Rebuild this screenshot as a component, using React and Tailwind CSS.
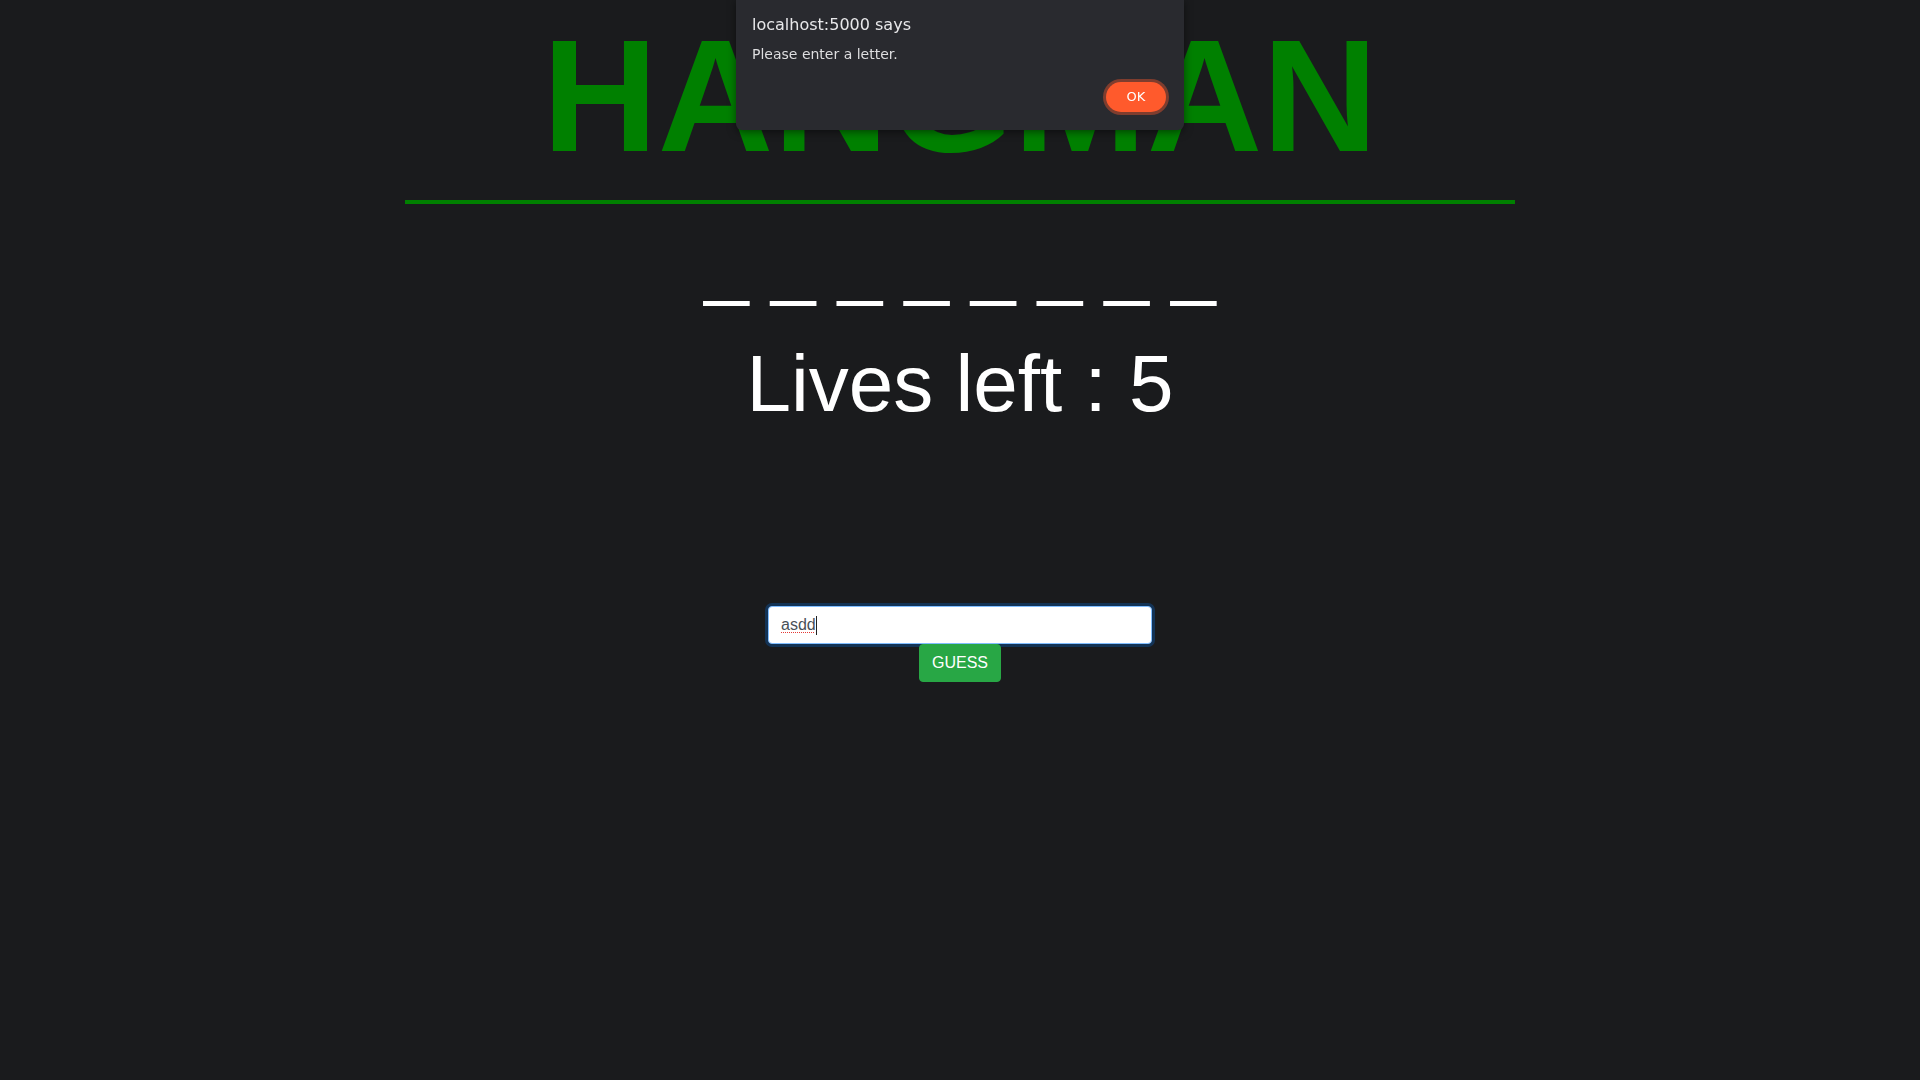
import React from 'react';

const App = () => {
  return (
    <div className="min-h-screen bg-[#1a1b1d] font-['Liberation_Sans',Arial,sans-serif] text-white">
      {/* Alert dialog */}
      <div className="fixed top-0 left-[736px] w-[448px] h-[130px] bg-[#292a2f] rounded-b-md shadow-[0_2px_8px_rgba(0,0,0,0.5)] px-4 font-['DejaVu_Sans',sans-serif] flex flex-col">
        <div className="pt-[15px] text-[16px] leading-[20px] text-[#e8e8ea]">localhost:5000 says</div>
        <div className="mt-[9px] text-[14px] leading-[20px] text-[#dedee0]">Please enter a letter.</div>
        <div className="mt-[18px] flex justify-end pr-[2px]">
          <button className="w-[60px] h-[30px] rounded-full bg-[#ff5a2c] text-white text-[13px] ring-[3px] ring-[#7f3d2e]">
            OK
          </button>
        </div>
      </div>

      <div className="w-[1110px] mx-auto">
        <h1 className="text-center font-bold text-[#008000] text-[160px] leading-[1.2]">HANGMAN</h1>
        <div className="mt-[8px] h-[4px] bg-[#008000]"></div>

        <div className="mt-[11px] text-center text-[80px] leading-[96px] whitespace-pre">_ _ _ _ _ _ _ _</div>
        <div className="mt-[25px] text-center text-[80px] leading-[96px]">Lives left : 5</div>

        <div className="mt-[174px] flex flex-col items-center">
          <div className="w-[384px] h-[38px] bg-white border border-[#80bdff] rounded-[4px] shadow-[0_0_0_3px_rgba(0,123,255,0.25)] px-3 flex items-center text-[16px] text-[#495057]">
            <span className="underline decoration-dotted decoration-[#e53935] decoration-1 underline-offset-2">asdd</span>
            <span className="w-px h-[19px] bg-[#222]"></span>
          </div>
          <button className="h-[38px] px-3 bg-[#28a745] border border-[#28a745] rounded-[4px] text-white text-[16px] leading-6">GUESS</button>
        </div>
      </div>
    </div>
  );
};

export default App;
